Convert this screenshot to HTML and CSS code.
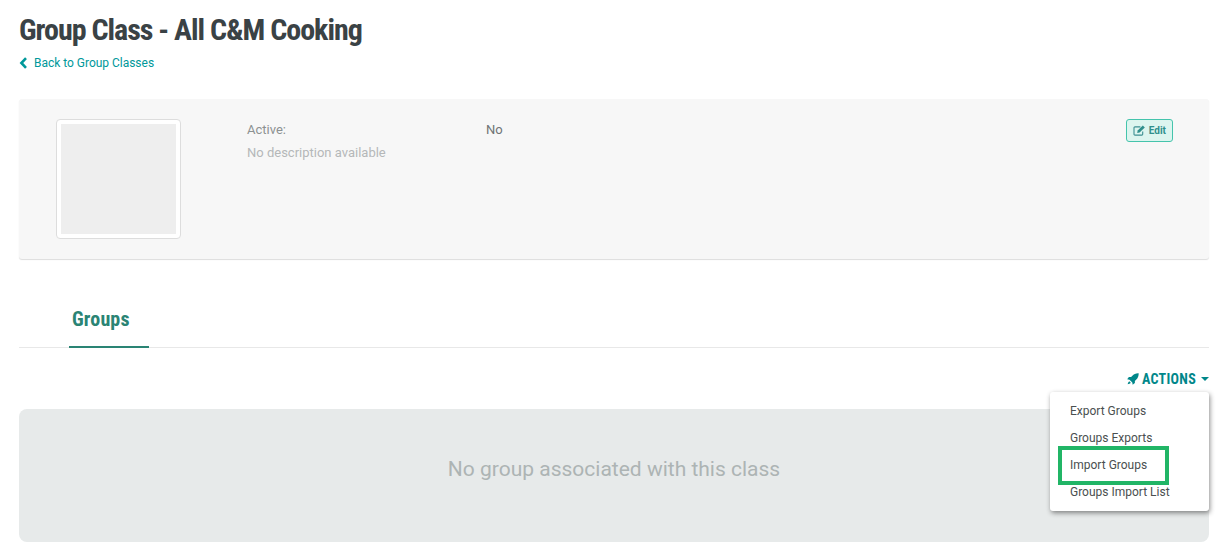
FILE: index.html
```html
<!DOCTYPE html>
<html lang="en">
<head>
<meta charset="UTF-8" />
<title>Group Class - All C&amp;M Cooking</title>
<link rel="stylesheet" href="styles.css">
</head>
<body>

<header class="page-head">
  <h1>Group Class - All C&amp;M Cooking</h1>
  <a class="back-link" href="#">
    <svg class="back-icon" viewBox="0 0 8 12" width="9" height="12"><path d="M6.500 1.200 1.900 6l4.600 4.800" fill="none" stroke="#00989a" stroke-width="2.600"/></svg>
    Back to Group Classes
  </a>
</header>

<section class="info-card">
  <div class="thumb"><div class="thumb-inner"></div></div>
  <div class="info">
    <div class="info-row">
      <span class="info-label">Active:</span>
      <span class="info-value">No</span>
    </div>
    <p class="info-desc">No description available</p>
  </div>
  <a class="btn-edit" href="#">
    <svg viewBox="0 0 14 12" width="13" height="11"><path d="M10.500 7v3a1 1 0 0 1-1 1H2a1 1 0 0 1-1-1V3a1 1 0 0 1 1-1h6" fill="none" stroke="#3d8f92" stroke-width="1.200"/><path d="M4.500 8.600 5 6l5.600-5.400 2.200 2.200L7.100 8.200z" fill="#2f8f8c"/></svg>
    Edit
  </a>
</section>

<nav class="tabs">
  <a class="tab active" href="#">Groups</a>
</nav>

<div class="actions-row">
  <a class="actions" href="#">
    <svg viewBox="0 0 14 14" width="12" height="12"><path d="M13.600.4C10.600.2 8 1.200 6 3.400L4.800 4.800H2.200L.2 7.400l2.700.4 3.300 3.300.4 2.700 2.600-2V9.200l1.400-1.200C12.800 6 13.800 3.400 13.600.4zM2.600 9.600C1.400 10.400 1 12 .8 13.200 2 13 3.600 12.600 4.400 11.400z" fill="#00878a"/></svg>
    ACTIONS
    <span class="caret"></span>
  </a>
  <ul class="menu">
    <li><a href="#">Export Groups</a></li>
    <li><a href="#">Groups Exports</a></li>
    <li><a class="marked" href="#">Import Groups</a></li>
    <li><a href="#">Groups Import List</a></li>
  </ul>
</div>

<div class="empty">No group associated with this class</div>

</body>
</html>
```

FILE: styles.css
```css
*, *::after {
  box-sizing: border-box;
}
body {
  margin: 0;
  padding: 0 18px 0 19px;
  font-family: Roboto, "Liberation Sans", sans-serif;
  font-size: 13px;
  color: #444;
  background: #fff;
}
a {
  text-decoration: none;
}
.page-head {
  height: 99px;
  padding-top: 12px;
}
h1 {
  margin: 0;
  font-size: 30px;
  line-height: 36px;
  font-weight: 700;
  font-stretch: 75%;
  letter-spacing: -1px;
  color: #3a4245;
}
.back-link {
  display: flex;
  align-items: center;
  gap: 6px;
  margin-top: 6px;
  font-size: 12px;
  line-height: 18px;
  letter-spacing: -0.02px;
  color: #00989a;
}
.info-card {
  display: flex;
  height: 160px;
  padding: 20px 36px 0 37px;
  background: #f7f7f7;
  border-radius: 3px;
  box-shadow: 0 1px 1px #ddd;
}
.thumb {
  width: 125px;
  height: 120px;
  padding: 4px;
  background: #fff;
  border: 1px solid #ddd;
  border-radius: 4px;
}
.thumb-inner {
  height: 100%;
  background: #eee;
}
.info {
  flex: 1;
  margin-left: 66px;
  padding-top: 1px;
}
.info-row {
  display: flex;
  line-height: 20px;
}
.info-label {
  width: 239px;
  color: #8c9192;
}
.info-value {
  color: #707475;
}
.info-desc {
  margin: 3px 0 0;
  line-height: 20px;
  color: #b5b8b9;
}
.btn-edit {
  display: flex;
  align-items: center;
  gap: 3px;
  align-self: flex-start;
  height: 23px;
  padding: 0 6px;
  font-size: 10px;
  font-weight: 700;
  color: #2f8f8c;
  background: #dcf5ef;
  border: 1px solid #45c4ac;
  border-radius: 3px;
}
.tabs {
  display: flex;
  height: 89px;
  padding: 48px 0 0 50px;
  border-bottom: 1px solid #e8e8e8;
}
.tab {
  width: 80px;
  height: 41px;
  padding: 0 3px;
  font-size: 20px;
  line-height: 25px;
  font-weight: 700;
  font-stretch: 75%;
  letter-spacing: 0.15px;
  color: #2a8474;
  border-bottom: 2px solid #2a8474;
}
.actions-row {
  position: relative;
  display: flex;
  justify-content: flex-end;
  height: 61px;
  padding-top: 22px;
}
.actions {
  display: flex;
  align-items: center;
  align-self: flex-start;
  gap: 3px;
  height: 18px;
  font-size: 14px;
  font-weight: 700;
  font-stretch: 87%;
  letter-spacing: 0.3px;
  color: #00878a;
}
.caret {
  margin-left: 2px;
  border-top: 4px solid #00878a;
  border-left: 4px solid transparent;
  border-right: 4px solid transparent;
}
.menu {
  position: absolute;
  top: 44px;
  right: 0;
  z-index: 2;
  width: 159px;
  height: 119px;
  margin: 0;
  padding: 6px 0;
  list-style: none;
  background: #fff;
  border-radius: 3px;
  box-shadow: 1px 2px 5px rgba(0, 0, 0, 0.45);
}
.menu a {
  display: block;
  height: 27px;
  padding-left: 20px;
  font-size: 12px;
  line-height: 27px;
  color: #4a4f50;
}
.menu .marked {
  position: relative;
}
.menu .marked::after {
  content: "";
  position: absolute;
  top: -6px;
  left: 8px;
  width: 111px;
  height: 39px;
  border: 4px solid #21b566;
}
.empty {
  display: flex;
  align-items: center;
  justify-content: center;
  height: 133px;
  padding-bottom: 14px;
  font-size: 21px;
  color: #adb4b4;
  background: #e7eaea;
  border-radius: 8px;
}
```
